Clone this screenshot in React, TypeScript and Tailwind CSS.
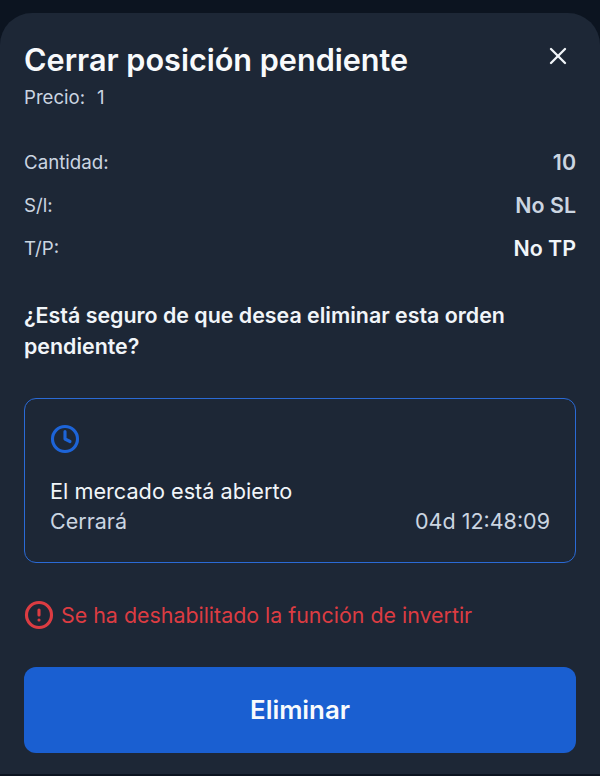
import { X, Clock, CircleAlert } from "lucide-react";

function Row({ label, children }: { label: string; children: React.ReactNode }) {
  return (
    <div className="flex h-[43px] items-center justify-between">
      <span className="text-[18.7px] text-[#cbd5e1]">{label}</span>
      {children}
    </div>
  );
}

export default function App() {
  return (
    <div className="h-[776px] w-[600px] overflow-hidden bg-[#0c1420] pt-[13px] font-['Inter',sans-serif]">
      <div className="flex h-[761px] flex-col rounded-t-[32px] bg-[#1d2736] px-6">
        <div className="flex items-start justify-between pt-[26px]">
          <h1 className="text-[30.6px] leading-[42px] font-semibold text-[#f8fafc]">Cerrar posición pendiente</h1>
          <X className="mt-[3px] mr-[4px] text-[#f1f5f9]" size={28} strokeWidth={2} />
        </div>
        <div className="mt-[4px] flex gap-[12px] text-[18.6px] leading-6 text-[#cbd5e1]">
          <span>Precio:</span>
          <span>1</span>
        </div>
        <div className="mt-[33px]">
          <Row label="Cantidad:">
            <span className="mb-[2px] text-[21.4px] font-semibold text-[#cbd5e1]">10</span>
          </Row>
          <Row label="S/l:">
            <span className="mb-[2px] text-[21.4px] font-semibold text-[#cbd5e1]">No SL</span>
          </Row>
          <Row label="T/P:">
            <span className="mb-[2px] text-[21.4px] font-semibold text-[#f1f5f9]">No TP</span>
          </Row>
        </div>
        <p className="mt-[29px] text-[21.4px] leading-[31px] font-semibold text-[#f1f5f9]">
          ¿Está seguro de que desea eliminar esta orden pendiente?
        </p>
        <div className="mt-[36px] flex h-[165px] flex-col rounded-xl border border-[#2a6ad6] px-[25px] pt-[25px]">
          <Clock className="text-[#1d64d8]" size={30} strokeWidth={2.5} />
          <div className="mt-[22px] text-[21.7px] leading-[30px] text-[#f1f5f9]">El mercado está abierto</div>
          <div className="flex justify-between text-[21.5px] leading-[30px] text-[#cbd5e1]">
            <span>Cerrará</span>
            <span>04d 12:48:09</span>
          </div>
        </div>
        <div className="mt-[37px] flex items-center gap-[7px] text-[21.4px] leading-[30px] text-[#dc3c42]">
          <CircleAlert size={30} strokeWidth={2.5} />
          <span>Se ha deshabilitado la función de invertir</span>
        </div>
        <button className="mt-[37px] h-[86px] w-full rounded-xl bg-[#1a5fd1] text-[25.8px] font-semibold text-[#f8fafc]">
          Eliminar
        </button>
      </div>
    </div>
  );
}
